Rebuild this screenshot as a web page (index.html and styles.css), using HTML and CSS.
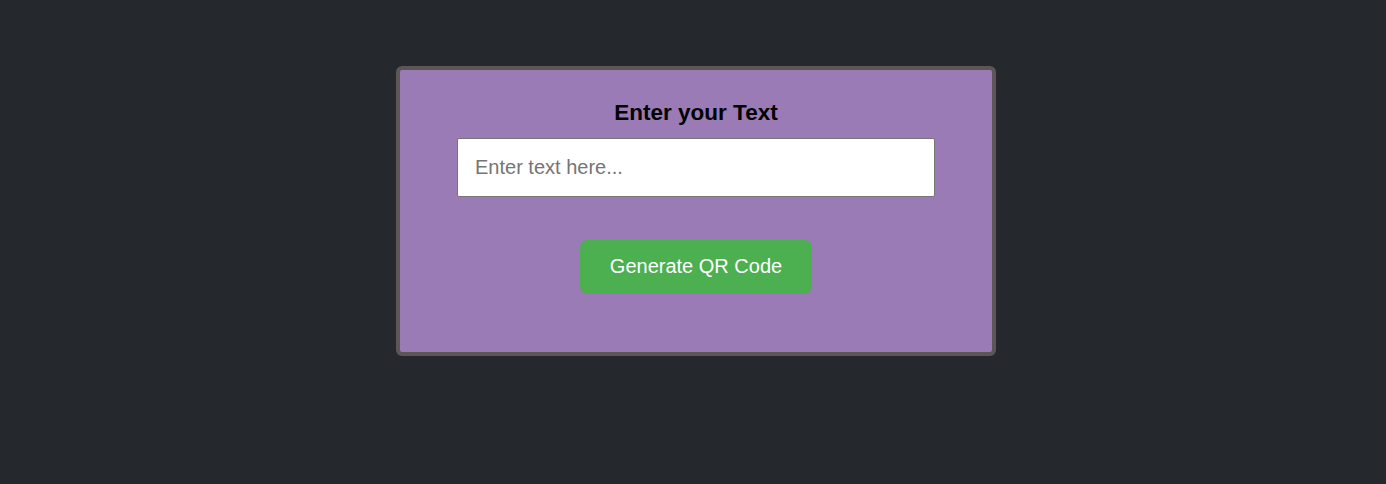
FILE: index.html
```html
<!DOCTYPE html>
<html>
<head>
<meta charset="utf-8">
<link rel="stylesheet" href="styles.css">
</head>
<body>
<div class="card">
  <h2 class="title">Enter your Text</h2>
  <input class="text-input" type="text" placeholder="Enter text here...">
  <button class="gen-btn">Generate QR Code</button>
</div>
</body>
</html>
```
FILE: styles.css
```css
html, body {
  margin: 0;
  padding: 0;
  background: #25282d;
  font-family: "Liberation Sans", Arial, sans-serif;
}
body {
  display: flex;
  justify-content: center;
  padding-top: 66px;
  padding-left: 6px;
}
.card {
  box-sizing: border-box;
  width: 600px;
  height: 290px;
  background: #9a7bb5;
  border: 4px solid #5d5657;
  border-radius: 6px;
  display: flex;
  flex-direction: column;
  align-items: center;
  padding-top: 30px;
}
.title {
  margin: 0;
  font-size: 22.5px;
  line-height: 26px;
  font-weight: bold;
  color: #000;
}
.text-input {
  box-sizing: border-box;
  margin-top: 12px;
  width: 478px;
  height: 59px;
  padding: 0 17px;
  font-family: "Liberation Sans", Arial, sans-serif;
  font-size: 20px;
  border: 1px solid #767676;
  border-radius: 2px;
  background: #fff;
  outline: none;
}
.text-input::placeholder {
  color: #757575;
}
.gen-btn {
  margin-top: 43px;
  width: 232px;
  height: 54px;
  padding: 0 0 2px;
  border: none;
  border-radius: 8px;
  background: #4caf50;
  color: #fff;
  font-family: "Liberation Sans", Arial, sans-serif;
  font-size: 20px;
  cursor: pointer;
}
```
